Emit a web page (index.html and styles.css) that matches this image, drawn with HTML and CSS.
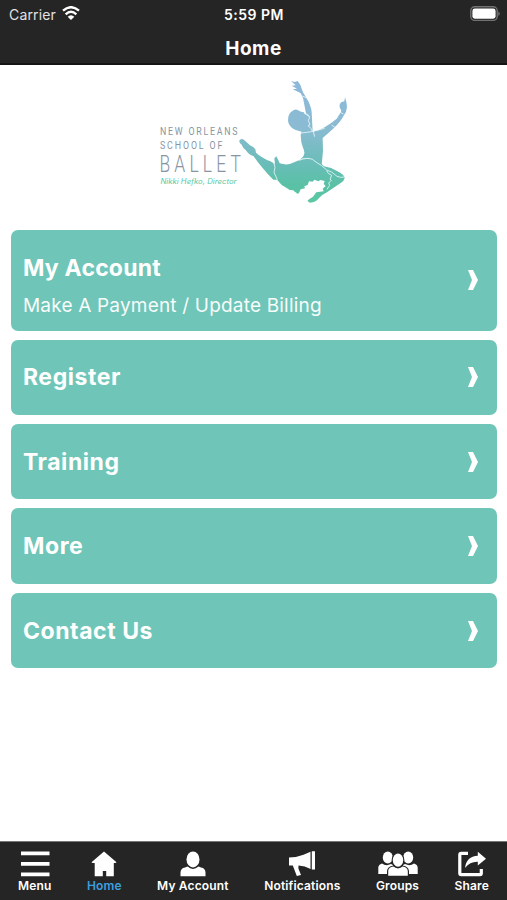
FILE: index.html
```
<!DOCTYPE html>
<html lang="en">
<head>
    <meta charset="UTF-8">
    <meta name="viewport" content="width=device-width, initial-scale=1.0">
    <title>Home</title>
    <link rel="stylesheet" href="styles.css">
</head>
<body>
    <header class="header">
        <div class="status-bar">
            <div class="carrier">
                <span class="carrier-name">Carrier</span>
                <svg class="wifi" viewBox="0 0 54 42">
                    <path d="M3 14 Q27 -7 51 14" />
                    <path d="M11 25 Q27 10 43 25" />
                    <path class="dot" d="M17 32 Q27 23 37 32 L27 42 Z" />
                </svg>
            </div>
            <span class="time">5:59 PM</span>
            <svg class="battery" viewBox="0 0 30 16">
                <rect x="0.8" y="0.8" width="26.4" height="13.6" rx="4" fill="none" stroke="#727272" stroke-width="1.4" />
                <rect x="2.4" y="2.5" width="23.2" height="10.2" rx="2.4" fill="#fff" />
                <path d="M28.3 5.3 Q31.3 7.6 28.3 10 Z" fill="#727272" />
            </svg>
        </div>
        <h1 class="title">Home</h1>
    </header>

    <main class="content">
        <div class="logo">
            <svg class="logo-text" viewBox="0 0 82 66">
                <text transform="translate(0 12.4) scale(0.8 1)" font-size="11" textLength="97">NEW ORLEANS</text>
                <text transform="translate(0 25.8) scale(0.8 1)" font-size="11" textLength="78">SCHOOL OF</text>
                <text class="ballet" transform="translate(-0.5 48.8) scale(0.76 1)" font-size="23" textLength="107">BALLET</text>
                <text class="director" x="0.5" y="61" font-size="7.2" textLength="76" lengthAdjust="spacingAndGlyphs">Nikki Hefko, Director</text>
            </svg>
            <svg class="dancer" viewBox="20 20 336 384">
                <defs>
                    <linearGradient id="fade" gradientUnits="userSpaceOnUse" x1="0" y1="30" x2="0" y2="400">
                        <stop offset="0" stop-color="#8cb8da" />
                        <stop offset="0.38" stop-color="#8bbbd3" />
                        <stop offset="0.68" stop-color="#69bdb8" />
                        <stop offset="0.85" stop-color="#59c1a5" />
                        <stop offset="1" stop-color="#5cc8a4" />
                    </linearGradient>
                </defs>
                <g fill="url(#fade)">
                    <path d="M182 32 L193 35 L202 32 Q212 43 215 58 Q218 68 228 82 Q242 105 244 125 L247 184 Q266 182 284 170 Q305 157 319 145 L330 128 L333 121 L328 111 Q326 101 334 95 L342 93 L344 81 L348 94 L350 110 Q349 126 340 136 Q332 152 310 174 Q293 190 277 203 L278 242 L274 284 Q257 270 231 263 Q219 261 207 270 L218 259 Q226 247 218 232 Q211 216 211 193 L214 184 Q196 182 186 174 Q174 164 173 150 Q173 131 185 123 Q193 115 202 119 Q209 124 220 126 L228 134 L225 119 L218 83 L211 69 L203 64 L187 57 L200 55 L184 46 L196 45 Z" />
                    <path d="M28 209 Q36 202 44 211 L59 225 Q70 229 75 237 L77 247 Q93 262 120 273 L134 281 L132 264 L138 258 L144 270 L148 279 Q164 284 178 281 Q190 277 206 270 Q222 262 232 264 Q264 267 281 288 Q304 292 320 302 Q342 312 343 323 Q342 331 331 338 L291 365 Q273 374 266 383 Q256 397 239 397 L231 392 Q235 386 248 379 L258 366 L280 363 L277 355 L286 347 L280 341 L283 332 L270 329 L264 333 L252 328 L247 334 L236 333 L232 344 L222 348 L224 354 L211 357 L206 368 Q201 373 198 367 Q191 364 189 360 Q176 360 163 349 L155 345 L140 328 L129 328 Q111 311 95 291 Q79 272 70 258 Q55 253 46 239 Q38 234 34 223 Q24 216 28 209 Z" />
                </g>
                <g class="seams">
                    <path d="M229 129 L238 140 L234 151 L239 163 L233 166 L243 175 L246 184 M249 184 L253 199 M213 188 L244 184 L283 174" />
                    <path d="M221 128 L237 139 M216 77 L230 83 M304 165 L313 170 M330 126 L339 131" />
                    <path d="M206 270 Q221 264 233 264 Q247 264 257 275 L274 286 L289 299 Q305 303 320 318 Q332 323 342 320" />
                    <path d="M130 276 L134 291 L131 306 L141 328" />
                    <path d="M289 301 Q291 310 304 315 L299 327 L303 330 L295 338 L298 345 L290 357" />
                </g>
            </svg>
        </div>

        <nav class="cards">
            <a class="card card-tall">
                <div>
                    <h2>My Account</h2>
                    <p>Make A Payment / Update Billing</p>
                </div>
                <svg class="chevron" viewBox="0 0 10 20"><path d="M0 0 H5 L10 10 L5 20 H0 L4 10 Z" /></svg>
            </a>
            <a class="card">
                <h2>Register</h2>
                <svg class="chevron" viewBox="0 0 10 20"><path d="M0 0 H5 L10 10 L5 20 H0 L4 10 Z" /></svg>
            </a>
            <a class="card">
                <h2>Training</h2>
                <svg class="chevron" viewBox="0 0 10 20"><path d="M0 0 H5 L10 10 L5 20 H0 L4 10 Z" /></svg>
            </a>
            <a class="card">
                <h2>More</h2>
                <svg class="chevron" viewBox="0 0 10 20"><path d="M0 0 H5 L10 10 L5 20 H0 L4 10 Z" /></svg>
            </a>
            <a class="card">
                <h2>Contact Us</h2>
                <svg class="chevron" viewBox="0 0 10 20"><path d="M0 0 H5 L10 10 L5 20 H0 L4 10 Z" /></svg>
            </a>
        </nav>
    </main>

    <nav class="tab-bar">
        <a class="tab">
            <svg width="30" height="26" viewBox="0 0 30 26">
                <path d="M1 0.5 H29.5 V4.3 H1 Z M1 11 H29.5 V14.8 H1 Z M1 21.5 H29.5 V25.3 H1 Z" />
            </svg>
            <span>Menu</span>
        </a>
        <a class="tab active">
            <svg width="26" height="26" viewBox="0 0 26 26">
                <path d="M13 0.5 L25.5 11.2 L24.5 12 H22.8 V25.3 H15.2 V20 H11.8 V25.3 H3.7 V12 H1.5 L0.5 11.2 Z" />
            </svg>
            <span>Home</span>
        </a>
        <a class="tab">
            <svg width="26" height="26" viewBox="0 0 26 26">
                <ellipse cx="13" cy="8.4" rx="6.5" ry="8" />
                <path d="M0.5 25.3 V21.5 Q0.5 17.2 5 16.4 L7.5 15.5 Q13 20.3 18.5 15.5 L21 16.4 Q25.5 17.2 25.5 21.5 V25.3 Z" />
            </svg>
            <span>My Account</span>
        </a>
        <a class="tab">
            <svg width="26" height="26" viewBox="0 0 26 26">
                <path d="M0 6.5 Q8 6.5 14.5 3.8 L21.5 0.8 V17.9 Q16 15 9.5 14.5 L9.4 17.5 L12 24 L7.8 25 L3.8 14.5 H0 Z M22.8 0.2 H26 V18.6 H22.8 Z" />
            </svg>
            <span>Notifications</span>
        </a>
        <a class="tab">
            <svg width="40" height="26" viewBox="0 0 40 26">
                <ellipse cx="9.8" cy="6.5" rx="5" ry="6.1" />
                <ellipse cx="30.2" cy="6.5" rx="5" ry="6.1" />
                <path d="M0.3 23 V16.5 Q0.5 13.5 4 12.5 Q8 15.5 13 13 L15 14 V23 Z M39.7 23 V16.5 Q39.5 13.5 36 12.5 Q32 15.5 27 13 L25 14 V23 Z" />
                <g stroke="#252525" stroke-width="2.4" paint-order="stroke">
                    <path d="M10.2 24.7 V20 Q10.5 16.5 15.3 15.6 Q20 19.2 24.7 15.6 Q29.5 16.5 29.8 20 V24.7 Z" />
                    <ellipse cx="20" cy="9.2" rx="5.2" ry="6.6" />
                </g>
            </svg>
            <span>Groups</span>
        </a>
        <a class="tab">
            <svg width="28" height="26" viewBox="0 0 28 26">
                <path d="M10 2.3 H3.2 Q1.8 2.3 1.8 3.7 V22.3 Q1.8 23.7 3.2 23.7 H22 Q23.3 23.7 23.3 22.3 V18" fill="none" stroke="#fff" stroke-width="3.2" />
                <path d="M19.8 0.8 L28 7.8 L19.8 14.6 V10.8 Q12 10.5 7 17 Q8.5 5.2 19.8 4.8 Z" />
            </svg>
            <span>Share</span>
        </a>
    </nav>
</body>
</html>
```
FILE: styles.css
```
* { margin: 0; padding: 0; box-sizing: border-box; }
body {
    font-family: Inter, 'Liberation Sans', sans-serif;
    background: #fff;
    color: #fff;
    height: 900px;
    display: flex;
    flex-direction: column;
    overflow: hidden;
}
svg { display: block; flex-shrink: 0; }

.header {
    height: 65px;
    background: #252525;
    border-bottom: 2px solid #151515;
}
.status-bar {
    display: grid;
    grid-template-columns: 1fr auto 1fr;
    align-items: center;
    height: 28px;
    padding: 0 6px 0 9px;
    font-size: 14px;
}
.carrier { display: flex; align-items: center; gap: 6px; color: #e2e2e2; }
.carrier-name { letter-spacing: 0.15px; }
.wifi { width: 18px; height: 14px; margin-top: -2px; }
.wifi path { fill: none; stroke: #fff; stroke-width: 7; }
.wifi .dot { fill: #fff; stroke: none; }
.time { font-weight: 600; letter-spacing: 0.5px; margin-left: -2px; }
.battery { width: 30px; height: 16px; justify-self: end; margin: -1px 1px 0 0; }
.title {
    font-size: 19px;
    line-height: 24px;
    font-weight: 700;
    letter-spacing: 0.5px;
    text-align: center;
    margin-top: 9px;
}

.content { flex: 1; padding: 0 10px 0 11px; }
.logo { display: flex; height: 165px; padding: 12px 0 0 149px; }
.logo-text { width: 82px; height: 66px; margin-top: 46px; overflow: visible; }
.logo-text text { font-family: Roboto, sans-serif; font-weight: 400; fill: #8795a3; }
.logo-text .ballet { font-weight: 300; }
.logo-text .director {
    font-family: Inter, sans-serif;
    font-style: italic;
    font-weight: 400;
    fill: #57c9a4;
}
.dancer { width: 112px; height: 128px; margin: -0.3px 0 0 -5.3px; }
.seams { fill: none; stroke: #e8f8f8; stroke-width: 2.5; }

.cards { display: flex; flex-direction: column; gap: 8.9px; }
.card {
    display: flex;
    align-items: center;
    justify-content: space-between;
    height: 75.5px;
    padding: 0 19px 0 12px;
    background: #6fc6b8;
    border-radius: 7px;
}
.card h2 { font-size: 23px; line-height: 30px; font-weight: 700; letter-spacing: 0.55px; }
.card p { font-size: 19px; line-height: 24px; letter-spacing: 0.19px; margin-top: 11px; opacity: 0.95; }
.card-tall { height: 100.7px; }
.card-tall div { padding-top: 11px; }
.card-tall h2 { letter-spacing: 0.2px; }
.chevron { width: 10px; height: 20px; fill: #fff; margin-right: 0.5px; }

.tab-bar {
    display: flex;
    justify-content: space-between;
    height: 59px;
    padding: 9px 18px 0;
    background: #252525;
    border-top: 1px solid #777;
}
.tab {
    display: flex;
    flex-direction: column;
    align-items: center;
    font-size: 12px;
    line-height: 16px;
    font-weight: 600;
    letter-spacing: 0.16px;
}
.tab svg { fill: #fff; }
.tab span { margin-top: 1px; }
.active { color: #3c9fde; }
```
